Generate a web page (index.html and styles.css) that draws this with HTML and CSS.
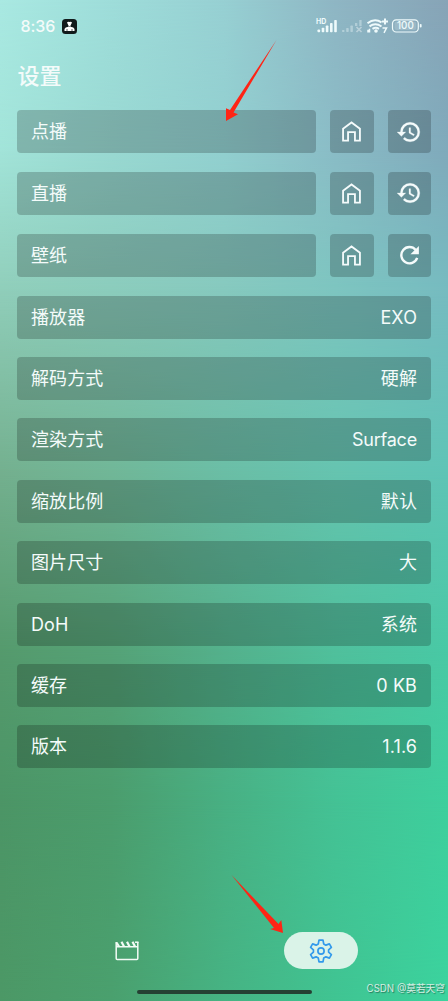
FILE: index.html
```html
<!DOCTYPE html>
<html lang="zh-CN">
<head>
<meta charset="utf-8">
<title>设置</title>
<link rel="stylesheet" href="styles.css">
</head>
<body>
<svg width="0" height="0" class="defs">
  <symbol id="home" viewBox="0 0 24 24"><path d="M3.2 9.200 12 2.600l8.800 6.600V21.500h-5.200v-8.800H8.400v8.800H3.200z" fill="none" stroke="currentColor" stroke-width="1.900"/></symbol>
  <symbol id="history" viewBox="0 0 24 24"><path fill="currentColor" stroke="currentColor" stroke-width=".25" d="M13.500 8H12v5l4.280 2.540.72-1.210-3.500-2.080V8M13 3a9 9 0 0 0-9 9H1l3.960 4.030L9 12H6a7 7 0 0 1 7-7 7 7 0 0 1 7 7 7 7 0 0 1-7 7c-1.930 0-3.680-.79-4.940-2.060l-1.420 1.420A8.900 8.900 0 0 0 13 21a9 9 0 0 0 9-9 9 9 0 0 0-9-9"/></symbol>
  <symbol id="refresh" viewBox="0 0 24 24"><path d="M18.500 6.200A8.500 8.500 0 1 0 20 14.500" fill="none" stroke="currentColor" stroke-width="2.500"/><path fill="currentColor" d="M21.800 2v8.800H13z"/></symbol>
</svg>
<div class="screen">
  <div class="wash wash-1"></div><div class="wash wash-2"></div><div class="wash wash-3"></div><div class="wash wash-4"></div><div class="wash wash-5"></div><div class="wash wash-6"></div>
  <header class="status">
    <span class="time">8:36</span>
    <svg class="app" viewBox="0 0 15 15"><rect width="15" height="15" rx="3.500" fill="#111a1b"/><path d="M5 3.500q1-1.200 2.500-.5 1.500-.7 2.500.5L8.800 6h-.5l.8 1.500H5.900L6.700 6h-.5z" fill="#fff"/><path d="M2.500 12v-2Q3.500 8 5.500 8h4q2 0 3 2v2z" fill="#fff"/><path d="M5 10v2M10 10v2" stroke="#111a1b" stroke-width=".7"/></svg>
    <svg class="signals" viewBox="0 0 108 18" fill="#eefafb">
      <text x="0" y="7" class="hd">HD</text>
      <rect x="1.500" y="12.500" width="2.600" height="2.800" rx=".8"/><rect x="5.700" y="10.800" width="2.600" height="4.500" rx=".8"/><rect x="9.800" y="8.500" width="2.600" height="6.800" rx=".8"/><rect x="14" y="6" width="2.600" height="9.300" rx=".8"/><rect x="18.200" y="3" width="2.600" height="12.300" rx=".8"/>
      <g opacity=".38"><rect x="26" y="13" width="2.500" height="2" rx=".7"/><rect x="30.200" y="11" width="2.500" height="4" rx=".7"/><rect x="34.400" y="8.500" width="2.500" height="6.500" rx=".7"/><rect x="39" y="6" width="2.300" height="3"/><rect x="43.300" y="3" width="2.300" height="6"/><path d="m40.500 10 5 5m0-5-5 5" stroke="#fff" stroke-width="1.600"/></g>
      <g fill="none" stroke="#eefafb" stroke-width="2"><path d="M51.500 6.200q7-5.300 14-.9M53.500 9.300q6-4 12 .2M56.500 11.800q3.300-2 6.500 0M69 1.500v6M66 4.500h6"/><path d="M66.500 11h4L68 15.800M53.500 11.800v3.700M52 12.700v2.800" stroke-width="1.500"/></g><circle cx="60" cy="14" r="1.800"/>
      <rect x="76.500" y="2.800" width="25.800" height="12.200" rx="3.700" fill="none" stroke="#eefafb" stroke-width="1.200"/><rect x="78.500" y="4.800" width="21.800" height="8.200" rx="2" opacity=".18"/><rect x="103.800" y="7" width="1.800" height="3.500" rx=".8"/>
      <text x="89.400" y="12.400" class="charge">100</text>
    </svg>
  </header>
  <h1 class="title">设置</h1>
  <main class="list">
    <div class="row"><div class="card"><span>点播</span></div><div class="button"><svg class="icon"><use href="#home"/></svg></div><div class="button"><svg class="icon wide"><use href="#history"/></svg></div></div>
    <div class="row"><div class="card"><span>直播</span></div><div class="button"><svg class="icon"><use href="#home"/></svg></div><div class="button"><svg class="icon wide"><use href="#history"/></svg></div></div>
    <div class="row"><div class="card"><span>壁纸</span></div><div class="button"><svg class="icon"><use href="#home"/></svg></div><div class="button"><svg class="icon"><use href="#refresh"/></svg></div></div>
    <div class="card"><span>播放器</span><span>EXO</span></div>
    <div class="card"><span>解码方式</span><span>硬解</span></div>
    <div class="card"><span>渲染方式</span><span class="snug">Surface</span></div>
    <div class="card"><span>缩放比例</span><span>默认</span></div>
    <div class="card"><span>图片尺寸</span><span>大</span></div>
    <div class="card"><span>DoH</span><span>系统</span></div>
    <div class="card"><span>缓存</span><span>0 KB</span></div>
    <div class="card"><span>版本</span><span>1.1.6</span></div>
  </main>
  <nav class="nav">
    <div class="tab"><svg class="film" viewBox="0 0 24 20" fill="none" stroke="#f2fbf5" stroke-width="1.500"><path d="M1.200 1v16.500q0 1 1 1h19.600q1 0 1-1V1M1.200 5.800h21.600"/><path d="M1.500 1.500 4 5.500M6.500.8 9 5.500M12 .8l2.500 4.700M17.500.8 20 5.500" stroke-width="2.200"/><path d="M20 1.200h3.500"/></svg></div>
    <div class="tab active"><svg class="gear" viewBox="0 0 24 24" fill="none" stroke="#3299eb" stroke-width="1.700" stroke-linejoin="round"><path d="M10 1.200h4l.7 3.700 2.200 1.250 3.500-1.250 2 3.500-2.800 2.400v2.400l2.800 2.400-2 3.500-3.500-1.250-2.200 1.250-.7 3.700h-4l-.7-3.700-2.200-1.250-3.500 1.250-2-3.500 2.800-2.400v-2.400L1.600 8.400l2-3.500 3.500 1.250 2.200-1.250z"/><circle cx="12" cy="12" r="3.100"/></svg></div>
  </nav>
  <div class="homebar"></div>
  <svg class="arrows" viewBox="0 0 448 1001" fill="#ff2415"><path d="M276.500 40 230 110 226 108.200V121l12-6.800-4.500-1.600z"/><path d="M231.500 875 274 928l-4 1 13 4-1.700-13-2.800 4z"/></svg>
  <div class="watermark">CSDN @莫若天穹</div>
</div>
</body>
</html>
```
FILE: styles.css
```css
* { box-sizing: border-box; }
body { margin: 0; font-family: Inter, "Noto Sans CJK SC", sans-serif; color: #f4fbfa; }
.defs { position: absolute; }
.screen {
  position: relative; isolation: isolate; display: flex; flex-direction: column;
  width: 448px; height: 1001px; overflow: hidden;
  background: linear-gradient(90deg, #a9e9e2, #9eddda, #97d0d3, #8fb6c4, #87a4b7);
}
.wash { position: absolute; inset: 0; z-index: -1; }
.wash-1 { background: linear-gradient(90deg, #a2e4d9, #99d9d2, #92d0d0, #8abcc6, #80aabb); mask-image: linear-gradient(transparent 0, #000 150px); }
.wash-2 { background: linear-gradient(90deg, #90ceba, #8bccbc, #86c9be, #7dc5c0, #76bbc0); mask-image: linear-gradient(transparent 150px, #000 290px); }
.wash-3 { background: linear-gradient(90deg, #74b08f, #71b798, #6bbea6, #66c4b0, #5fc4b6); mask-image: linear-gradient(transparent 290px, #000 470px); }
.wash-4 { background: linear-gradient(90deg, #559a6d, #55a277, #54b18c, #50c09c, #49c9a5); mask-image: linear-gradient(transparent 470px, #000 650px); }
.wash-5 { background: linear-gradient(90deg, #4c9566, #4b9d6d, #48b083, #44c295, #3ecf9d); mask-image: linear-gradient(transparent 650px, #000 800px); }
.wash-6 { background: linear-gradient(90deg, #4c9866, #4aa06e, #46b383, #40c492, #3bd39e); mask-image: linear-gradient(transparent 800px, #000 1001px); }
.status { display: flex; align-items: center; height: 52px; padding: 0 24px 0 20.500px; }
.time { width: 41px; font-size: 16px; font-weight: 500; letter-spacing: -.1px; }
.app { width: 15px; height: 15px; }
.signals { width: 108px; height: 18px; margin-left: auto; overflow: visible; }
.hd { font: 700 7px Inter, sans-serif; }
.charge { font: 500 9.800px Inter, sans-serif; text-anchor: middle; }
.title { margin: 7px 0 0 17.500px; height: 51px; line-height: 35px; font-size: 22px; font-weight: 500; }
.list { display: flex; flex-direction: column; gap: 18.400px; padding: 0 17px; }
.row { display: flex; gap: 14px; height: 43.100px; }
.row + .row, .row + .card { margin-top: .4px; }
.row .card { flex: 1; }
.card, .button { height: 43px; border-radius: 4px; background: rgba(0, 0, 0, .2); }
.card { display: flex; align-items: center; justify-content: space-between; padding: 1px 14px 0; font-size: 18px; line-height: 26px; letter-spacing: .1px; }
.snug { letter-spacing: -.2px; }
.button { display: flex; align-items: center; justify-content: center; width: 43.400px; }
.icon { width: 23px; height: 23px; color: #f5fbfb; }
.wide { width: 26px; height: 26px; }
.nav { display: flex; height: 37px; margin-top: auto; margin-bottom: 21px; padding: 0 30px; }
.tab { display: flex; flex: 1; align-items: center; justify-content: center; }
.film { width: 24px; height: 20px; }
.active { flex: none; width: 74px; margin: 0 60.500px; border-radius: 19px; background: #daf3e8; }
.gear { width: 24px; height: 24px; }
.homebar { width: 175px; height: 4px; margin: 0 auto 7px; border-radius: 2px; background: #254033; }
.arrows { position: absolute; inset: 0; width: 448px; height: 1001px; }
.watermark { position: absolute; right: 3px; bottom: 4px; font-size: 9.700px; line-height: 16px; color: #d4eee3; text-shadow: 1px 1px 1px rgba(0, 0, 0, .4); }
```
